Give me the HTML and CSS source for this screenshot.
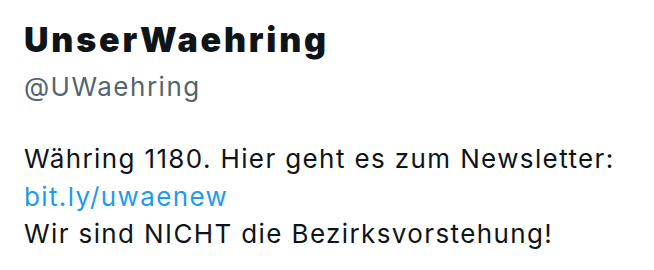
FILE: index.html
```html
<!DOCTYPE html>
<html lang="de">
<head>
<meta charset="utf-8">
<link rel="stylesheet" href="styles.css">
</head>
<body>
<div class="profile">
  <div class="name">UnserWaehring</div>
  <div class="handle">@UWaehring</div>
  <div class="bio">Währing 1180. Hier geht es zum Newsletter:<br><a class="link" href="#">bit.ly/uwaenew</a><br>Wir sind NICHT die Bezirksvorstehung!</div>
</div>
</body>
</html>
```
FILE: styles.css
```css
html, body { margin: 0; padding: 0; background: #fff; }
body { font-family: Inter, "Noto Sans", sans-serif; color: #0f1419; }
.profile { padding: 20px 24px 0 24px; }
.name { font-size: 34px; font-weight: 900; line-height: 40px; letter-spacing: 2.8px; }
.handle { margin-top: 9px; font-size: 26px; line-height: 36px; color: #536471; letter-spacing: 1.5px; }
.bio { margin-top: 35px; font-size: 26px; line-height: 37.5px; letter-spacing: 1.38px; }
.link { color: #1d9bf0; text-decoration: none; }
```
